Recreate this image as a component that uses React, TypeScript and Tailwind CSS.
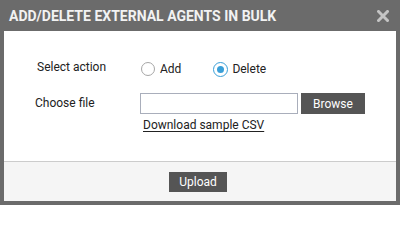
import React from "react";

export default function App() {
  const font = { fontFamily: "Roboto, 'Liberation Sans', sans-serif" };
  return (
    <div
      className="w-[400px] h-[205px] bg-[#6b6b6b] flex flex-col"
      style={font}
    >
      <div className="h-[31px] flex items-center justify-between pl-[9px] pr-[11px]">
        <span className="text-[14px] font-bold text-[#f2f2f2] leading-[16px]">
          ADD/DELETE EXTERNAL AGENTS IN BULK
        </span>
        <svg width="12" height="12" viewBox="0 0 12 12" className="mt-[1px]">
          <path d="M1.5 1.5 L10.5 10.5 M10.5 1.5 L1.5 10.5" stroke="#c4c4c4" strokeWidth="3" strokeLinecap="square" />
        </svg>
      </div>
      <div className="flex-1 mx-[4px] mb-[4px] flex flex-col">
        <div className="h-[130px] bg-white flex flex-col text-[12px] leading-[14px] text-[#222]">
          <div className="flex items-start mt-[29px]">
            <span className="pl-[33px] w-[137px]">Select action</span>
            <div className="flex items-center h-[16px] mt-[1px]">
              <span className="w-[14px] h-[14px] rounded-full border border-[#a6a6a6] bg-white" />
              <span className="ml-[5px] mt-[-1px]">Add</span>
              <span className="ml-[32px] w-[15px] h-[15px] rounded-full border border-[#3a9fd8] bg-white flex items-center justify-center">
                <span className="w-[7px] h-[7px] rounded-full bg-[#3a9fd8]" />
              </span>
              <span className="ml-[4px] mt-[-1px]">Delete</span>
            </div>
          </div>
          <div className="flex items-start mt-[16px]">
            <span className="pl-[31px] w-[136px] mt-[3px]">Choose file</span>
            <div className="flex flex-col">
              <div className="flex items-center">
                <div className="w-[158px] h-[21px] border border-[#a9aebb] bg-white" />
                <button className="ml-[3px] w-[64px] h-[21px] bg-[#555555] text-white text-[12px] leading-[14px]">
                  Browse
                </button>
              </div>
              <a className="ml-[3px] mt-[4px] underline underline-offset-[2px] text-[#222] cursor-pointer">
                Download sample CSV
              </a>
            </div>
          </div>
        </div>
        <div className="flex-1 bg-[#f5f5f5] border-t border-[#cccccc] flex items-center justify-center pr-[4px]">
          <button className="w-[58px] h-[20px] bg-[#555555] text-white text-[12px] leading-[14px]">
            Upload
          </button>
        </div>
      </div>
    </div>
  );
}
